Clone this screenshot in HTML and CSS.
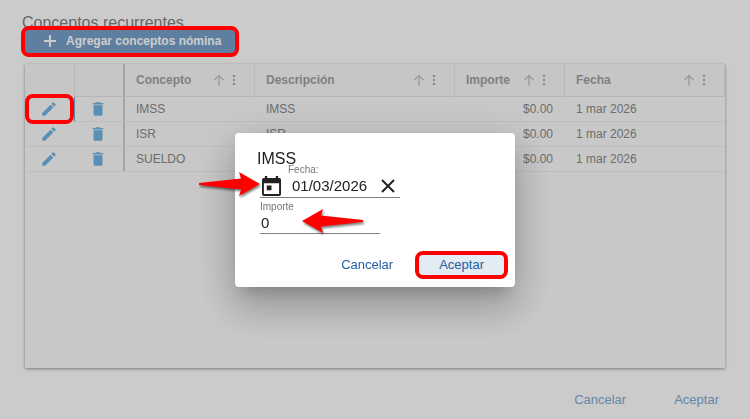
FILE: index.html
```html
<!DOCTYPE html>
<html lang="es">
<head>
    <meta charset="UTF-8">
    <meta name="viewport" content="width=device-width, initial-scale=1.0">
    <title>Conceptos recurrentes</title>
    <link rel="stylesheet" href="styles.css">
</head>
<body>
    <svg class="sprite" aria-hidden="true">
        <symbol id="pencil" viewBox="0 0 24 24"><path d="M3 17.25V21h3.75L17.81 9.94l-3.75-3.75L3 17.25zM20.71 7.04a1 1 0 0 0 0-1.41l-2.34-2.34a1 1 0 0 0-1.41 0l-1.83 1.83 3.75 3.75 1.83-1.83z"/></symbol>
        <symbol id="trash" viewBox="0 0 24 24"><path d="M6 19c0 1.1.9 2 2 2h8c1.1 0 2-.9 2-2V7H6v12zM19 4h-3.5l-1-1h-5l-1 1H5v2h14V4z"/></symbol>
        <symbol id="sort" viewBox="0 0 12 12"><path d="M6 11.5V1.5M1.5 6L6 1.5L10.5 6"/></symbol>
        <symbol id="dots" viewBox="0 0 4 12"><circle cx="2" cy="2" r="1.3"/><circle cx="2" cy="6" r="1.3"/><circle cx="2" cy="10" r="1.3"/></symbol>
        <symbol id="arrow" viewBox="0 0 64 26"><path d="M1 12L43 7.500L41 1L62 13L41 25L43 18.500L1 14Z"/></symbol>
    </svg>

    <main class="page">
        <h1 class="page-title">Conceptos recurrentes</h1>
        <button class="add-button mark" type="button">
            <svg viewBox="0 0 12 12"><path d="M6 0V12M0 6H12"/></svg>
            Agregar conceptos nómina
        </button>

        <div class="grid">
            <table>
                <thead>
                    <tr>
                        <th class="col-icon"></th>
                        <th class="col-icon pinned"></th>
                        <th class="col-concept"><div class="head">Concepto<svg class="sort"><use href="#sort"/></svg><svg class="dots"><use href="#dots"/></svg></div></th>
                        <th class="col-desc"><div class="head">Descripción<svg class="sort"><use href="#sort"/></svg><svg class="dots"><use href="#dots"/></svg></div></th>
                        <th class="col-amount"><div class="head">Importe<svg class="sort"><use href="#sort"/></svg><svg class="dots"><use href="#dots"/></svg></div></th>
                        <th><div class="head">Fecha<svg class="sort"><use href="#sort"/></svg><svg class="dots"><use href="#dots"/></svg></div></th>
                    </tr>
                </thead>
                <tbody>
                    <tr>
                        <td class="action selected"><button class="icon-button mark" type="button" aria-label="Editar IMSS"><svg><use href="#pencil"/></svg></button></td>
                        <td class="action pinned"><button class="icon-button" type="button" aria-label="Eliminar IMSS"><svg><use href="#trash"/></svg></button></td>
                        <td>IMSS</td>
                        <td>IMSS</td>
                        <td class="amount">$0.00</td>
                        <td>1 mar 2026</td>
                    </tr>
                    <tr>
                        <td class="action"><button class="icon-button" type="button" aria-label="Editar ISR"><svg><use href="#pencil"/></svg></button></td>
                        <td class="action pinned"><button class="icon-button" type="button" aria-label="Eliminar ISR"><svg><use href="#trash"/></svg></button></td>
                        <td>ISR</td>
                        <td>ISR</td>
                        <td class="amount">$0.00</td>
                        <td>1 mar 2026</td>
                    </tr>
                    <tr>
                        <td class="action"><button class="icon-button" type="button" aria-label="Editar SUELDO"><svg><use href="#pencil"/></svg></button></td>
                        <td class="action pinned"><button class="icon-button" type="button" aria-label="Eliminar SUELDO"><svg><use href="#trash"/></svg></button></td>
                        <td>SUELDO</td>
                        <td>SUELDO</td>
                        <td class="amount">$0.00</td>
                        <td>1 mar 2026</td>
                    </tr>
                </tbody>
            </table>
        </div>

        <div class="page-actions">
            <button class="text-button" type="button">Cancelar</button>
            <button class="text-button" type="button">Aceptar</button>
        </div>
    </main>

    <div class="overlay">
        <form class="dialog" role="dialog" aria-labelledby="dialog-title">
            <h2 class="dialog-title" id="dialog-title">IMSS</h2>
            <div class="field field-date">
                <label for="fecha">Fecha:</label>
                <div class="date-row">
                    <button class="date-button" type="button" aria-label="Abrir calendario">
                        <svg class="calendar" viewBox="0 0 20 21"><path fill-rule="evenodd" d="M3 0h2.500v2h9V0H17v2h1a2 2 0 0 1 2 2v15a2 2 0 0 1-2 2H2a2 2 0 0 1-2-2V4a2 2 0 0 1 2-2h1zM2 7.500V19h16V7.500zM5 10h5v5H5z"/></svg>
                    </button>
                    <input type="text" id="fecha" value="01/03/2026">
                    <button class="date-button" type="button" aria-label="Borrar fecha">
                        <svg class="clear" viewBox="0 0 14 14"><path d="M1 1L13 13M13 1L1 13"/></svg>
                    </button>
                </div>
                <svg class="arrow arrow-date"><use href="#arrow"/></svg>
            </div>
            <div class="field field-amount">
                <label for="importe">Importe</label>
                <input type="text" id="importe" value="0">
                <svg class="arrow arrow-amount" viewBox="0 0 64 26"><use href="#arrow" transform="rotate(180 32 13)"/></svg>
            </div>
            <div class="dialog-actions">
                <button class="text-button" type="button">Cancelar</button>
                <button class="text-button focused mark" type="button">Aceptar</button>
            </div>
        </form>
    </div>
</body>
</html>
```
FILE: styles.css
```css
* {
    box-sizing: border-box;
}
body {
    margin: 0;
    background: #fefefe;
    font-family: "Liberation Sans", Arial, sans-serif;
    font-size: 12px;
    color: #888;
}
button, input {
    font: inherit;
    color: inherit;
    border: none;
    background: none;
    padding: 0;
    margin: 0;
}
button {
    cursor: pointer;
}
svg {
    display: block;
    flex: none;
}
.sprite {
    position: absolute;
    width: 0;
    height: 0;
}
.page {
    display: flex;
    flex-direction: column;
    min-height: 100vh;
    padding: 13px 25px 0;
}
.page-title {
    margin: 0 -3px;
    font-size: 16px;
    line-height: 20px;
    height: 16px;
    font-weight: normal;
    color: #808080;
}
.add-button {
    display: flex;
    align-items: center;
    align-self: flex-start;
    gap: 10px;
    height: 24px;
    padding: 0 14px 0 19px;
    background: #769fc7;
    color: #fff;
    font-weight: bold;
}
.add-button svg {
    width: 12px;
    height: 12px;
    stroke: #fff;
    stroke-width: 2;
}

/* red highlight around a control */
.mark {
    position: relative;
}
.mark::after {
    content: "";
    position: absolute;
    z-index: 20;
    inset: -3px -4px -4px;
    border: 4px solid #f00;
    border-radius: 8px;
}

.grid {
    flex: 1;
    margin-top: 11px;
    background: #fbfbfb;
    box-shadow: 0 1px 3px rgba(0, 0, 0, 0.4);
}
table {
    width: 100%;
    table-layout: fixed;
    border-collapse: separate;
    border-spacing: 0;
}
th, td {
    padding: 0 12px 0 11px;
    text-align: left;
    border-bottom: 1px solid #efefef;
}
th {
    height: 33px;
    color: #a0a0a0;
    background: #f8f8f8;
    border-right: 1px solid #e8e8e8;
    border-bottom-color: #e4e4e4;
}
td {
    height: 25px;
}
.col-icon {
    width: 50px;
}
.col-concept {
    width: 130px;
}
.col-desc {
    width: 200px;
}
.col-amount {
    width: 110px;
}
.pinned {
    border-right: 2px solid #cfcfcf;
}
.head {
    display: flex;
    align-items: center;
}
.sort {
    width: 12px;
    height: 12px;
    margin-left: auto;
    fill: none;
    stroke: #c4c4c4;
    stroke-width: 1.5;
}
.dots {
    width: 4px;
    height: 12px;
    margin: 0 6px 0 7px;
    fill: #b0b0b0;
}
.amount {
    text-align: right;
}
.action {
    padding: 0;
}
.selected {
    border-right: 1px solid #76a9d6;
}
.icon-button {
    display: flex;
    align-items: center;
    justify-content: center;
    width: 100%;
    height: 24px;
    padding-right: 2px;
}
.icon-button svg {
    width: 18px;
    height: 18px;
    fill: #70b3e2;
}
.icon-button.mark::after {
    inset: -3px 0;
}
.page-actions {
    display: flex;
    justify-content: flex-end;
    gap: 8px;
    padding: 20px 0 9px;
    margin-right: -14px;
    color: #80a8d4;
}
.text-button {
    height: 22px;
    padding: 0 20px;
    font-size: 13px;
}

.overlay {
    position: fixed;
    inset: 0;
    z-index: 10;
    display: flex;
    align-items: center;
    justify-content: center;
    background: rgba(0, 0, 0, 0.2);
}
.dialog {
    width: 280px;
    padding: 16px 7px 12px 25px;
    border-radius: 4px;
    background: #fff;
    color: #222;
    box-shadow: 0 11px 15px -7px rgba(0, 0, 0, 0.2), 0 24px 38px 3px rgba(0, 0, 0, 0.14), 0 9px 46px 8px rgba(0, 0, 0, 0.12);
}
.dialog-title {
    margin: 0 -3px;
    font-size: 16px;
    line-height: 20px;
    height: 16px;
    font-weight: normal;
}
.field {
    position: relative;
    border-bottom: 1px solid #808080;
}
.field label {
    display: block;
    font-size: 10px;
    line-height: 10px;
    color: #777;
}
.field input {
    width: 100%;
    min-width: 0;
    height: 22px;
    padding-left: 1px;
    font-size: 15px;
}
.field-date {
    width: 140px;
}
.field-date label {
    padding-left: 28px;
}
.date-row {
    display: flex;
    align-items: center;
    gap: 10px;
    padding: 0 5px 0 2px;
}
.calendar {
    width: 19px;
    height: 20px;
    fill: #222;
}
.clear {
    width: 14px;
    height: 14px;
    stroke: #222;
    stroke-width: 2;
}
.field-amount {
    width: 120px;
    padding-top: 4px;
}
.field-amount input {
    height: 21px;
}
.arrow {
    position: absolute;
    width: 64px;
    height: 26px;
    fill: #f00;
    filter: drop-shadow(1px 2px 1px rgba(0, 0, 0, 0.5));
    overflow: visible;
}
.arrow-date {
    top: 6px;
    left: -62px;
}
.arrow-amount {
    top: 10px;
    left: 40px;
}
.dialog-actions {
    display: flex;
    justify-content: flex-end;
    gap: 6px;
    padding-top: 20px;
    margin-right: 4px;
    color: #2460a0;
}
.dialog-actions .text-button {
    height: 21px;
}
.focused {
    background: #e3ebf3;
}
```
